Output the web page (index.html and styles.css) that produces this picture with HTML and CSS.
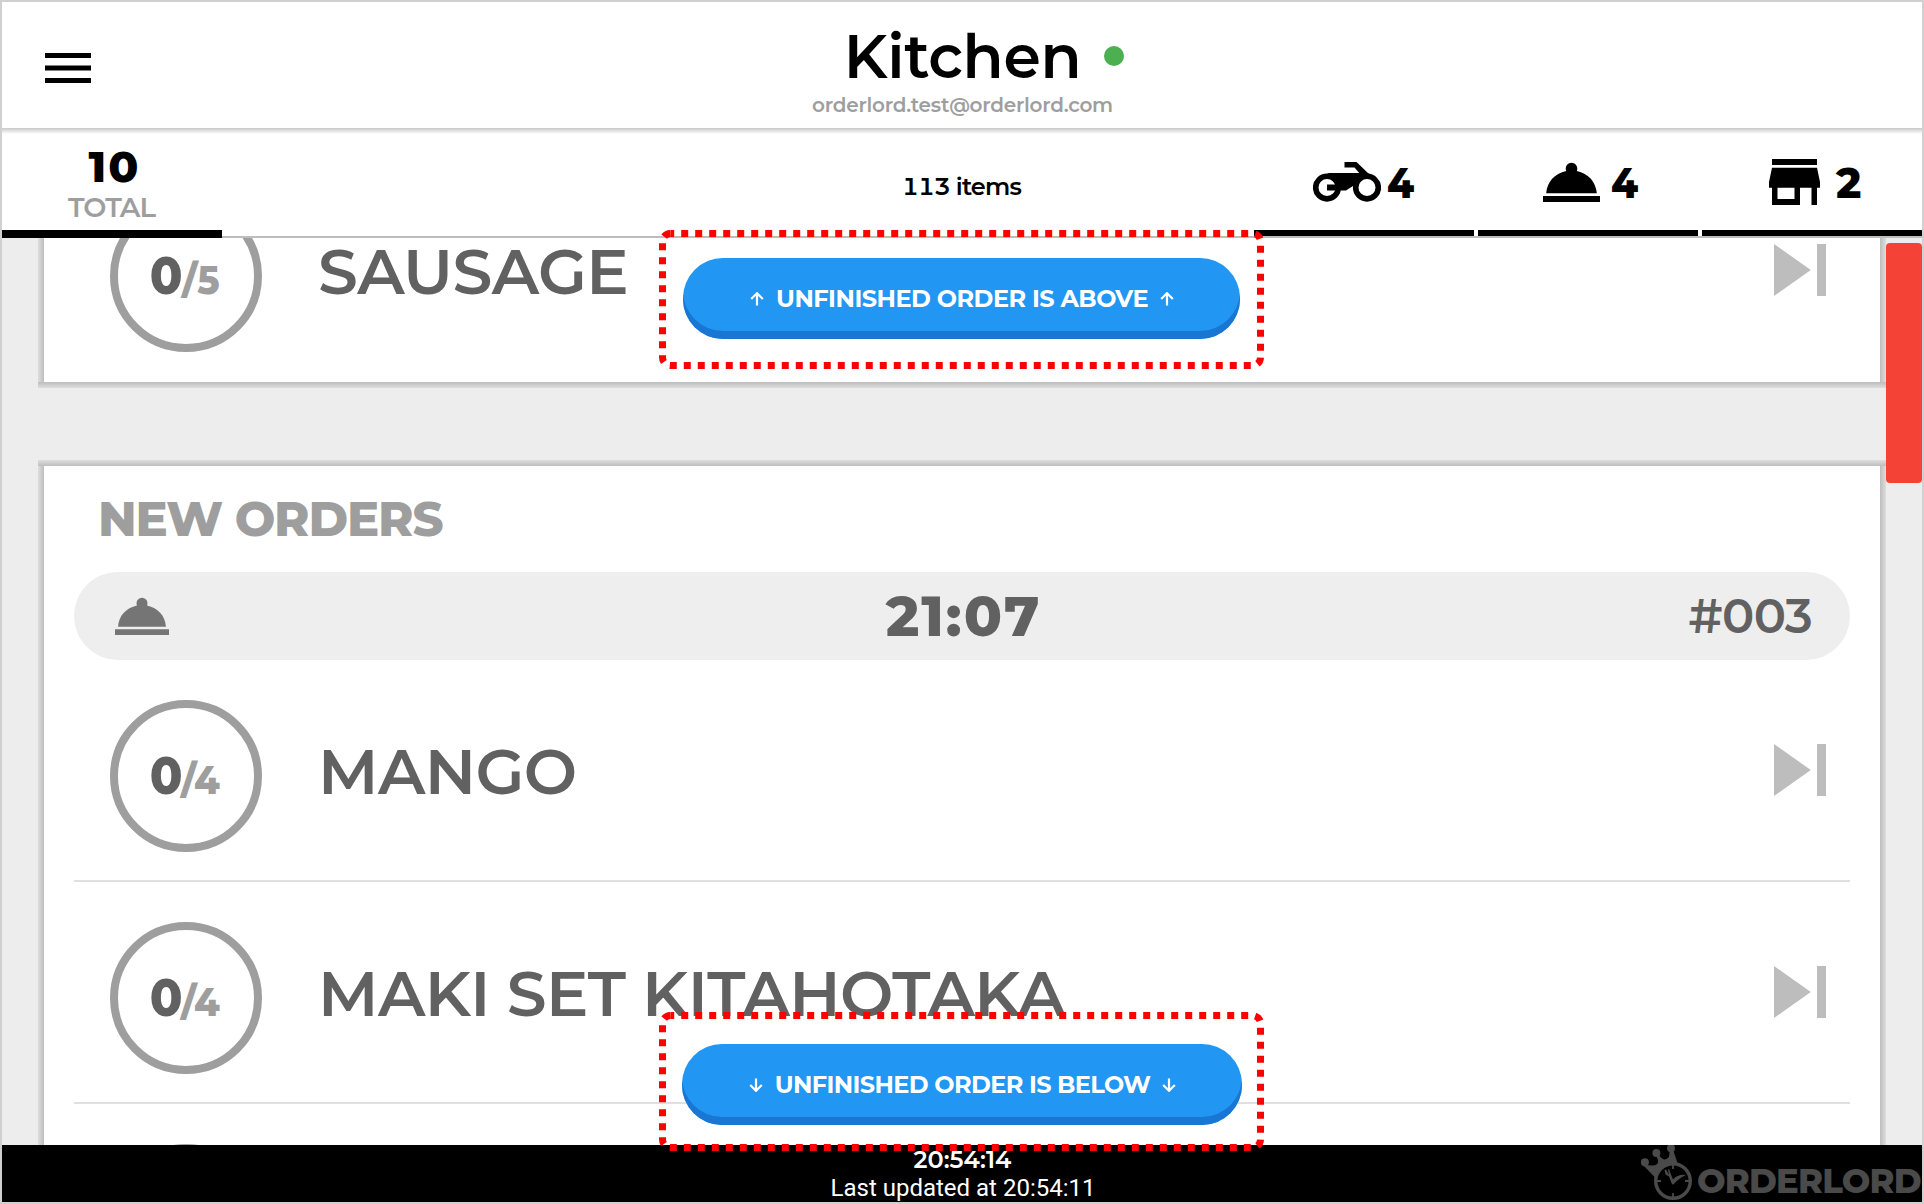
FILE: index.html
```
<!DOCTYPE html>
<html lang="en">
<head>
<meta charset="utf-8">
<title>Kitchen</title>
<link rel="stylesheet" href="styles.css">
</head>
<body>
<svg class="defs" aria-hidden="true">
  <symbol id="cloche" viewBox="0 0 57 40">
    <path d="M3.2 31.3C4 20 11.500 11.500 23.200 9A5.800 5.800 0 1 1 33.800 9C45.500 11.500 53 20 53.800 31.300Z"/>
    <path d="M0 34H57V40H0Z"/>
  </symbol>
  <symbol id="next" viewBox="0 0 52 52">
    <path d="M0 0L36.800 26L0 52ZM43 0H52V52H43Z"/>
  </symbol>
</svg>
<div class="app">
  <header class="header">
    <button class="menu" aria-label="Menu">
      <svg width="46" height="30" viewBox="0 0 46 30"><path d="M0 0H46V5H0ZM0 12.500H46V17.500H0ZM0 25H46V30H0Z"/></svg>
    </button>
    <div class="heading">
      <h1 class="title">Kitchen<span class="status"></span></h1>
      <div class="account">orderlord.test@orderlord.com</div>
    </div>
  </header>

  <nav class="stats">
    <div class="total">
      <div class="total-count">10</div>
      <div class="total-label">TOTAL</div>
    </div>
    <div class="items">113 items</div>
    <div class="types">
      <div class="type bike">
        <svg width="68" height="40" viewBox="0 0 68 40">
          <path d="M31.500 0H43.500L56 12L50 15.500L41.500 5.600H31.500Z"/>
          <circle cx="14" cy="25.600" r="11.300"/>
          <circle cx="54" cy="25.600" r="11.300"/>
          <path d="M14 22.500H25L22 15L14 11H56L40 24L33 28.500H14Z"/>
        </svg>
        <span>4</span>
      </div>
      <div class="type dine">
        <svg width="57" height="40"><use href="#cloche"/></svg>
        <span>4</span>
      </div>
      <div class="type shop">
        <svg width="51" height="46" viewBox="0 0 51 46">
          <path fill-rule="evenodd" d="M3 0H48V6H3ZM3 8.800H48L51 23V28.800H48V46H42.500V28.800H31V46H3V28.800H0V23ZM8.500 28.800V40H25.500V28.800Z"/>
        </svg>
        <span>2</span>
      </div>
    </div>
  </nav>

  <main class="orders">
    <section class="frame frame-first">
      <div class="card">
        <div class="row">
          <div class="counter"><b>0</b><i>/5</i></div>
          <div class="name">SAUSAGE</div>
          <svg class="skip" width="52" height="52"><use href="#next"/></svg>
        </div>
      </div>
    </section>
    <section class="frame">
      <div class="card">
        <h2 class="group">NEW ORDERS</h2>
        <div class="order">
          <svg width="54" height="38" viewBox="0 0 57 40"><use href="#cloche" width="57" height="40"/></svg>
          <div class="due">21:07</div>
          <div class="number">#003</div>
        </div>
        <div class="row">
          <div class="counter"><b>0</b><i>/4</i></div>
          <div class="name">MANGO</div>
          <svg class="skip" width="52" height="52"><use href="#next"/></svg>
        </div>
        <div class="row">
          <div class="counter"><b>0</b><i>/4</i></div>
          <div class="name">MAKI SET KITAHOTAKA</div>
          <svg class="skip" width="52" height="52"><use href="#next"/></svg>
        </div>
        <div class="row">
          <div class="counter"></div>
        </div>
      </div>
    </section>
    <div class="scroll-thumb"></div>
  </main>

  <footer class="footer">
    <div class="clock">20:54:14</div>
    <div class="updated">Last updated at 20:54:11</div>
    <div class="brand">
      <svg width="55" height="57" viewBox="0 0 55 57">
        <circle cx="3.900" cy="17.300" r="4"/><circle cx="15.400" cy="8" r="4"/><circle cx="30" cy="3.200" r="4"/>
        <path d="M2 20L12 20.500Q18 20 17 15L14.500 9H17L20 12.500Q24 16.500 28 12L29 3H31.500L37 19.500Q22 20 15.500 34Z"/>
        <circle class="ring" cx="32" cy="36" r="17.300"/>
        <path class="tick" d="M32 19V24M32 48V53M15 36H20M44 36H49"/>
        <path d="M30.500 38L28 31.500L24.500 29.500L23.500 25L25 24.500L28 30L27 24.300H28L30 29.500L32 34.500Q37 29 45 30Q40 32 33.500 38Q32 41 30.500 38Z"/>
      </svg>
      <span>ORDERLORD</span>
    </div>
  </footer>

  <button class="jump jump-up">
    <svg class="arrow" viewBox="0 0 14 14"><path d="M7 13.500V1.500M1.200 7L7 1.200L12.800 7"/></svg>
    <span>UNFINISHED ORDER IS ABOVE</span>
    <svg class="arrow" viewBox="0 0 14 14"><path d="M7 13.500V1.500M1.200 7L7 1.200L12.800 7"/></svg>
  </button>
  <button class="jump jump-down">
    <svg class="arrow" viewBox="0 0 14 14"><path d="M7 .5V12.500M1.200 7L7 12.800L12.800 7"/></svg>
    <span>UNFINISHED ORDER IS BELOW</span>
    <svg class="arrow" viewBox="0 0 14 14"><path d="M7 .5V12.500M1.200 7L7 12.800L12.800 7"/></svg>
  </button>
  <svg class="marker marker-up" width="605" height="139"><rect x="3.500" y="3.500" width="598" height="132" rx="8"/></svg>
  <svg class="marker marker-down" width="605" height="139"><rect x="3.500" y="3.500" width="598" height="132" rx="8"/></svg>
</div>
</body>
</html>
```
FILE: styles.css
```
* { box-sizing: border-box; }

body {
  margin: 0;
  font-family: Montserrat, Inter, "Open Sans", sans-serif;
  color: #000;
}

h1, h2 { margin: 0; }

button {
  margin: 0;
  padding: 0;
  border: 0;
  background: none;
  font: inherit;
}

svg { display: block; flex: none; }

.defs { position: absolute; width: 0; height: 0; }

.app {
  position: relative;
  display: flex;
  flex-direction: column;
  width: 1924px;
  height: 1204px;
  border: 2px solid #d0d0d0;
  background: #fff;
  overflow: hidden;
}

/* Header */
.header {
  display: grid;
  grid-template-columns: 1fr auto 1fr;
  flex: none;
  height: 126px;
}

.menu { justify-self: start; align-self: start; margin: 51px 0 0 43px; }

.heading { padding: 25px 0 0 1px; text-align: center; }

.title {
  position: relative;
  width: max-content;
  margin: 0 auto;
  font-size: 60px;
  line-height: 60px;
  font-weight: 600;
  letter-spacing: -.3px;
}

.status {
  position: absolute;
  left: 100%;
  top: 19px;
  width: 20px;
  height: 20px;
  margin-left: 23px;
  border-radius: 50%;
  background: #4caf50;
}

.account {
  margin-top: 8px;
  font-size: 20px;
  line-height: 20px;
  font-weight: 600;
  letter-spacing: -.23px;
  color: #9e9e9e;
}

/* Totals bar */
.stats {
  display: grid;
  grid-template-columns: 1fr auto 1fr;
  flex: none;
  height: 110px;
  background:
    linear-gradient(#c8c8c8, #fff) top / 100% 6px no-repeat,
    linear-gradient(#bdbdbd, #bdbdbd) bottom / 100% 2px no-repeat;
}

.total {
  width: 220px;
  height: 110px;
  padding-top: 16px;
  border-bottom: 8px solid #000;
  text-align: center;
}

.total-count {
  font-size: 44px;
  line-height: 44px;
  font-weight: 800;
  letter-spacing: 2px;
  padding-left: 5px;
}

.total-label {
  margin-top: 3.500px;
  font-size: 27.500px;
  line-height: 31px;
  font-weight: 600;
  letter-spacing: -1px;
  text-indent: -1px;
  color: #9e9e9e;
}

.items {
  padding-top: 43.500px;
  font-size: 24px;
  line-height: 30px;
  font-weight: 600;
  font-variant-numeric: tabular-nums;
  letter-spacing: -.8px;
  text-indent: -1px;
}

.types { display: flex; justify-content: flex-end; gap: 4px; }

.type {
  display: flex;
  width: 220px;
  height: 108px;
  border-bottom: 6px solid #000;
  font-size: 44px;
  line-height: 44px;
  font-weight: 800;
}

.type svg { margin-top: 34px; }
.type span { margin-top: 32px; transform: scaleX(.88); transform-origin: left; }

.bike { padding-left: 59px; }
.bike span { margin-left: 6px; }
.bike circle { fill: none; stroke: #000; stroke-width: 5.600px; }
.dine { padding-left: 65px; }
.dine span { margin-left: 11px; }
.shop { padding-left: 67px; }
.shop svg { margin-top: 31px; }
.shop span { margin-left: 16px; transform: scaleX(.96); }

/* Order list */
.orders {
  position: relative;
  flex: none;
  height: 907px;
  padding: 0 36px;
  background: #ededed;
  overflow: hidden;
}

.frame {
  padding: 6px;
  background:
    linear-gradient(to top, #bdbdbd, #dedede) top / 100% 6px no-repeat,
    linear-gradient(#bdbdbd, #dedede) bottom / 100% 6px no-repeat,
    linear-gradient(to left, #bdbdbd, #dedede) left / 6px 100% no-repeat,
    linear-gradient(to right, #bdbdbd, #dedede) right / 6px 100% no-repeat;
}

.frame-first { margin: -84px 0 72px; }

.card { padding: 0 30px; background: #fff; }

.group {
  padding: 24px 0 24px 24px;
  font-size: 48px;
  line-height: 58px;
  font-weight: 800;
  letter-spacing: -1.150px;
  color: #9e9e9e;
}

.order {
  display: grid;
  grid-template-columns: 1fr auto 1fr;
  align-items: center;
  height: 88px;
  padding: 0 38px 0 41px;
  border-radius: 44px;
  background: #eee;
  color: #616161;
}

.order svg { fill: #757575; }

.due {
  font-size: 56px;
  line-height: 88px;
  font-weight: 800;
  letter-spacing: 2px;
}

.number {
  justify-self: end;
  font-size: 48px;
  line-height: 88px;
  font-weight: 600;
  letter-spacing: -.7px;
}

.row {
  display: flex;
  align-items: flex-start;
  height: 222px;
  padding: 40px 24px 28px 36px;
  border-bottom: 2px solid #e0e0e0;
}

.row:last-child { border-bottom-color: transparent; }

.counter {
  display: flex;
  justify-content: center;
  align-items: baseline;
  flex: none;
  width: 152px;
  height: 152px;
  border: 8px solid #9e9e9e;
  border-radius: 50%;
  line-height: 135px;
}

.counter b,
.counter i { transform: scaleX(.92); }
.counter b { margin-right: -1px; transform-origin: right; font-size: 52px; font-weight: 800; color: #616161; }
.counter i { margin-right: 2px; transform-origin: left; font-size: 40px; font-style: normal; font-weight: 800; color: #9e9e9e; }

.name {
  flex: 1;
  margin: 40px 0 0 56px;
  font-size: 63.400px;
  line-height: 64px;
  font-weight: 600;
  letter-spacing: -.65px;
  color: #616161;
  white-space: nowrap;
}

.skip { margin-top: 44px; fill: #bdbdbd; }

.scroll-thumb {
  position: absolute;
  top: 5px;
  right: 0;
  width: 36px;
  height: 240px;
  border-radius: 4px;
  background: #f44336;
}

/* Footer */
.footer {
  position: relative;
  flex: none;
  height: 57px;
  padding: 1px 0 0 1px;
  background: #000;
  color: #fff;
  font-size: 24px;
  line-height: 28px;
  text-align: center;
}

.clock { font-weight: 600; }
.updated { font-family: Roboto, sans-serif; text-indent: 1px; }

.brand {
  position: absolute;
  top: 0;
  right: 0;
  display: flex;
  width: 281px;
  height: 57px;
  overflow: hidden;
  color: #4a4a4a;
  font-size: 33.800px;
  line-height: 34px;
  font-weight: 800;
}

.brand svg { fill: #4a4a4a; }
.brand span { margin: 19px 0 0 1px; letter-spacing: -.8px; }
.ring { fill: #000; stroke: #4a4a4a; stroke-width: 3.400px; }
.tick { fill: none; stroke: #4a4a4a; stroke-width: 1.800px; }

/* Floating jump buttons */
.jump {
  position: absolute;
  display: flex;
  justify-content: center;
  align-items: center;
  gap: 12px;
  height: 81px;
  padding-left: 1px;
  border-radius: 40px;
  background: #2196f3;
  box-shadow: inset 0 -8px #1976d2;
  color: #fff;
  font-size: 24px;
  line-height: 30px;
  font-weight: 700;
  letter-spacing: -.5px;
  white-space: nowrap;
}

.jump-up { left: 681px; top: 256px; width: 557px; }
.jump-down { left: 680px; top: 1042px; width: 560px; letter-spacing: -.6px; }

.arrow {
  width: 14px;
  height: 14px;
  fill: none;
  stroke: #fff;
  stroke-width: 2.200px;
}

/* Dotted highlight around the jump buttons */
.marker { position: absolute; left: 657px; fill: none; stroke: #f00; stroke-width: 7px; stroke-dasharray: 7 7; stroke-dashoffset: 3.300px; }
.marker-up { top: 228px; }
.marker-down { top: 1010px; }
```
